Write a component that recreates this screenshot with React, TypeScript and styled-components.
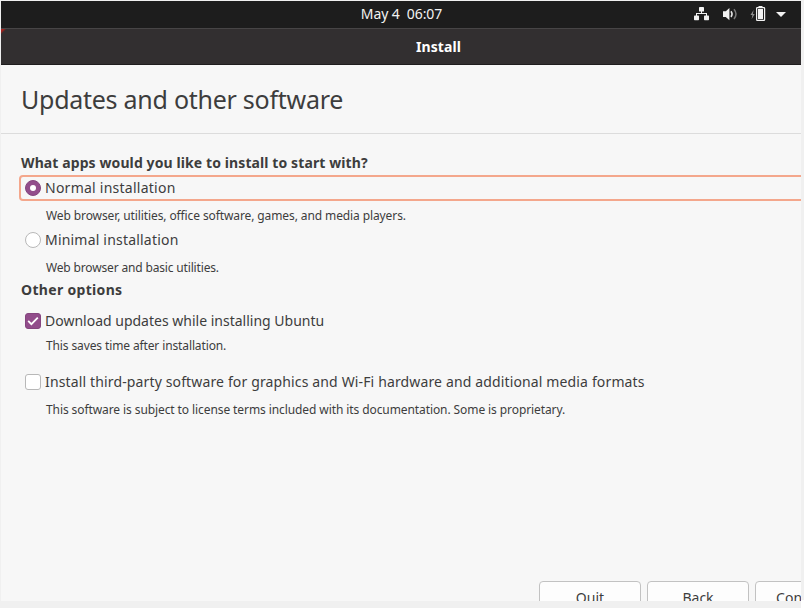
import React from "react";
import styled, { createGlobalStyle } from "styled-components";

const GlobalStyle = createGlobalStyle`
  html, body { margin: 0; padding: 0; overflow: hidden; }
  body { background: #f0f0f0; font-family: "Noto Sans", sans-serif; color: #3d3d3d; }
  * { box-sizing: border-box; }
`;

const Page = styled.div`
  width: 804px;
  height: 608px;
  padding: 1px 3px 7px 1px;
  background: linear-gradient(#fff, #fff) 801px 600px / 3px 8px no-repeat, #f0f0f0;
`;

const Screen = styled.div`
  width: 800px;
  height: 600px;
  overflow: hidden;
  display: flex;
  flex-direction: column;
  background: #f7f7f7;
`;

const TopBar = styled.header`
  flex: 0 0 27px;
  display: grid;
  grid-template-columns: 1fr auto 1fr;
  align-items: start;
  background: #1d1d1d;
  color: #f2f2f2;
`;

const Clock = styled.time`
  grid-column: 2;
  padding-left: 1px;
  font-size: 14px;
  line-height: 25px;
  letter-spacing: -0.08px;
  white-space: pre;
`;

const StatusArea = styled.div`
  grid-column: 3;
  justify-self: end;
  display: flex;
  gap: 12px;
  padding-right: 15px;
  height: 27px;

  svg { display: block; }
  svg:last-child { margin-left: -2px; }
`;

const TitleBar = styled.div`
  flex: 0 0 37px;
  display: flex;
  align-items: center;
  justify-content: center;
  padding-left: 75px;
  border-top: 1px solid #474546;
  border-bottom: 1px solid #1f1d1e;
  background: linear-gradient(135deg, #a5201c 2px, transparent 4px), #322f30;
  color: #fff;
  font-size: 14px;
  font-weight: 700;
  letter-spacing: 0.1px;
`;

const PageHeader = styled.div`
  flex: 0 0 69px;
  min-height: 0;
  padding-left: 20px;
  border-bottom: 1px solid #dcdcdc;
`;

const PageTitle = styled.h1`
  margin: 0;
  font-size: 25px;
  font-weight: 400;
  line-height: 69px;
  letter-spacing: -0.26px;
`;

const Content = styled.main`
  flex: 1;
  display: flex;
  flex-direction: column;
  padding: 16px 0 0 18px;
  white-space: nowrap;
`;

const SectionTitle = styled.h2<{ $top?: number; $tracking: number }>`
  margin: ${(p) => p.$top ?? 0}px 0 0;
  padding-left: 2px;
  font-size: 14px;
  font-weight: 700;
  line-height: 25px;
  letter-spacing: ${(p) => p.$tracking}px;
`;

const OptionRow = styled.label<{ $top?: number; $focused?: boolean }>`
  display: flex;
  align-items: center;
  gap: 4px;
  height: ${(p) => (p.$focused ? 26 : 20)}px;
  margin: ${(p) => p.$top ?? 0}px ${(p) => (p.$focused ? -4 : 0)}px 0 0;
  padding-left: ${(p) => (p.$focused ? 4 : 6)}px;
  border: ${(p) => (p.$focused ? "2px solid #f4a78c" : "0")};
  border-radius: 4px;
`;

const OptionLabel = styled.span<{ $tracking: number }>`
  font-size: 14px;
  line-height: 20px;
  letter-spacing: ${(p) => p.$tracking}px;
`;

const Radio = styled.span<{ $checked?: boolean }>`
  display: grid;
  place-items: center;
  width: 16px;
  height: 16px;
  border: 1px solid ${(p) => (p.$checked ? "#85467f" : "#b8b8b8")};
  border-radius: 50%;
  background: ${(p) => (p.$checked ? "#924d8b" : "#fff")};

  &::after {
    content: "";
    width: 6px;
    height: 6px;
    border-radius: 50%;
    background: #fff;
  }
`;

const Checkbox = styled.span<{ $checked?: boolean }>`
  display: grid;
  place-items: center;
  width: 16px;
  height: 16px;
  border: 1px solid ${(p) => (p.$checked ? "#85467f" : "#b8b8b8")};
  border-radius: 3px;
  background: ${(p) => (p.$checked ? "#924d8b" : "#fff")};
`;

const Description = styled.p<{ $top: number; $tracking: number }>`
  margin: ${(p) => p.$top}px 0 0;
  padding-left: 27px;
  font-size: 12px;
  line-height: 21px;
  letter-spacing: ${(p) => p.$tracking}px;
`;

const Actions = styled.footer`
  display: flex;
  gap: 6px;
  height: 20px;
  margin: auto 0 0 520px;
  overflow: hidden;
`;

const ActionButton = styled.button`
  flex: 0 0 102px;
  height: 34px;
  padding: 0;
  border: 1px solid #c2c2c2;
  border-radius: 4px;
  background: #fdfdfd;
  color: #3d3d3d;
  font: 14px/32px "Noto Sans", sans-serif;
`;

const NetworkIcon = () => (
  <svg width="16" height="27" viewBox="0 0 16 27" fill="#f2f2f2">
    <rect x="5" y="6" width="5" height="4.6" rx=".7" />
    <path d="M7 10h1v2h5v3h-1v-2H3v2H2v-3h5z" />
    <rect x="0" y="14.5" width="5" height="4.7" rx=".7" />
    <rect x="10" y="14.5" width="5" height="4.7" rx=".7" />
  </svg>
);

const VolumeIcon = () => (
  <svg width="16" height="27" viewBox="0 0 16 27" fill="none">
    <path d="M1 10.2h2.8L7.4 7v12.3l-3.6-3.3H1z" fill="#f2f2f2" />
    <path d="M9 10.2q2.2 2.9 0 5.8" stroke="#e6e6e6" strokeWidth="1.5" />
    <path d="M12 8.2q4 4.9 0 9.8" stroke="#7a7a7a" strokeWidth="1.5" />
  </svg>
);

const BatteryIcon = () => (
  <svg width="16" height="27" viewBox="0 0 16 27">
    <path d="M3.6 9L.5 14h1.9l-.8 4.2L4.7 13H2.9z" fill="#909090" />
    <path d="M8.5 5h4v1h-4z" fill="#f2f2f2" />
    <rect x="6.6" y="6.6" width="8" height="12.8" rx=".7" fill="none" stroke="#f2f2f2" strokeWidth="1.2" />
    <rect x="8" y="8" width="5" height="10" fill="#f2f2f2" />
  </svg>
);

const ArrowIcon = () => (
  <svg width="10" height="27" viewBox="0 0 10 27">
    <path d="M0 11h10l-5 5z" fill="#f2f2f2" />
  </svg>
);

const CheckMark = () => (
  <svg width="14" height="14" viewBox="0 0 14 14" fill="none" stroke="#fff" strokeWidth="1.8">
    <path d="M2.2 6.8l3.2 3.3 6.4-6.4" />
  </svg>
);

export default function App() {
  return (
    <>
      <GlobalStyle />
      <Page>
        <Screen>
          <TopBar>
            <Clock>{"May 4  06:07"}</Clock>
            <StatusArea>
              <NetworkIcon />
              <VolumeIcon />
              <BatteryIcon />
              <ArrowIcon />
            </StatusArea>
          </TopBar>
          <TitleBar>Install</TitleBar>
          <PageHeader>
            <PageTitle>Updates and other software</PageTitle>
          </PageHeader>
          <Content>
            <SectionTitle $tracking={0.1}>What apps would you like to install to start with?</SectionTitle>
            <OptionRow $focused>
              <Radio $checked />
              <OptionLabel $tracking={0.25}>Normal installation</OptionLabel>
            </OptionRow>
            <Description $top={4} $tracking={-0.105}>
              Web browser, utilities, office software, games, and media players.
            </Description>
            <OptionRow $top={4}>
              <Radio />
              <OptionLabel $tracking={0.2}>Minimal installation</OptionLabel>
            </OptionRow>
            <Description $top={7} $tracking={-0.16}>Web browser and basic utilities.</Description>
            <SectionTitle $top={-1} $tracking={0.32}>Other options</SectionTitle>
            <OptionRow $top={9}>
              <Checkbox $checked>
                <CheckMark />
              </Checkbox>
              <OptionLabel $tracking={0}>Download updates while installing Ubuntu</OptionLabel>
            </OptionRow>
            <Description $top={4} $tracking={-0.12}>This saves time after installation.</Description>
            <OptionRow $top={16}>
              <Checkbox />
              <OptionLabel $tracking={0.14}>
                Install third-party software for graphics and Wi-Fi hardware and additional media formats
              </OptionLabel>
            </OptionRow>
            <Description $top={7} $tracking={-0.09}>
              This software is subject to license terms included with its documentation. Some is proprietary.
            </Description>
            <Actions>
              <ActionButton>Quit</ActionButton>
              <ActionButton>Back</ActionButton>
              <ActionButton>Continue</ActionButton>
            </Actions>
          </Content>
        </Screen>
      </Page>
    </>
  );
}
